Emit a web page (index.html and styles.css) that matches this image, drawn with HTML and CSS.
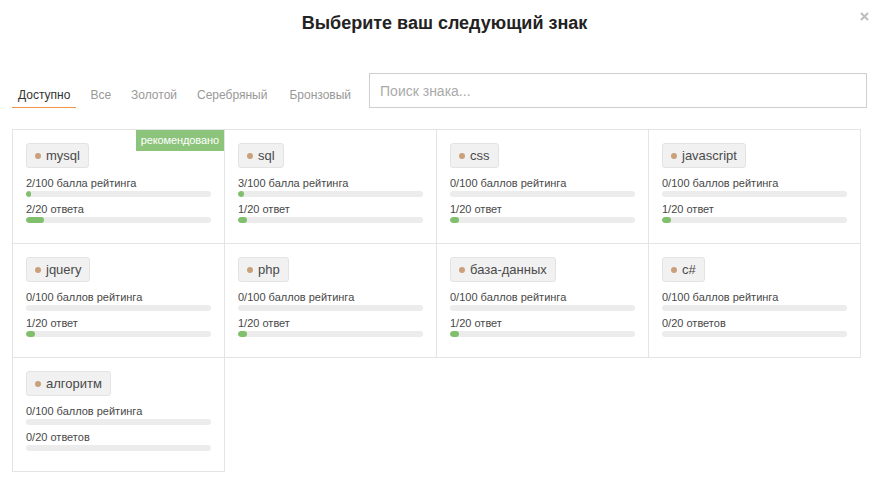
FILE: index.html
```html
<!DOCTYPE html>
<html lang="ru">
<head>
<meta charset="utf-8">
<link rel="stylesheet" href="styles.css">
</head>
<body>
<div class="modal">
  <button class="close" aria-label="close"><svg width="9" height="9" viewBox="0 0 9 9"><path d="M1 1L8 8M8 1L1 8" stroke="#bdbdbd" stroke-width="2"/></svg></button>
  <h1 class="title">Выберите ваш следующий знак</h1>
  <div class="toolbar">
    <nav class="tabs">
      <a class="tab active">Доступно</a>
      <a class="tab">Все</a>
      <a class="tab">Золотой</a>
      <a class="tab">Серебряный</a>
      <a class="tab">Бронзовый</a>
    </nav>
    <input class="search" type="text" placeholder="Поиск знака...">
  </div>
  <div class="grid">
    <div class="cell">
      <span class="badge">рекомендовано</span>
      <span class="tag"><i class="dot"></i>mysql</span>
      <div class="label">2/100 балла рейтинга</div>
      <div class="bar"><div class="fill" style="width:5px"></div></div>
      <div class="label">2/20 ответа</div>
      <div class="bar"><div class="fill" style="width:18px"></div></div>
    </div>
    <div class="cell">
      <span class="tag"><i class="dot"></i>sql</span>
      <div class="label">3/100 балла рейтинга</div>
      <div class="bar"><div class="fill" style="width:6px"></div></div>
      <div class="label">1/20 ответ</div>
      <div class="bar"><div class="fill" style="width:9px"></div></div>
    </div>
    <div class="cell">
      <span class="tag"><i class="dot"></i>css</span>
      <div class="label">0/100 баллов рейтинга</div>
      <div class="bar"></div>
      <div class="label">1/20 ответ</div>
      <div class="bar"><div class="fill" style="width:9px"></div></div>
    </div>
    <div class="cell">
      <span class="tag"><i class="dot"></i>javascript</span>
      <div class="label">0/100 баллов рейтинга</div>
      <div class="bar"></div>
      <div class="label">1/20 ответ</div>
      <div class="bar"><div class="fill" style="width:9px"></div></div>
    </div>
    <div class="cell">
      <span class="tag"><i class="dot"></i>jquery</span>
      <div class="label">0/100 баллов рейтинга</div>
      <div class="bar"></div>
      <div class="label">1/20 ответ</div>
      <div class="bar"><div class="fill" style="width:9px"></div></div>
    </div>
    <div class="cell">
      <span class="tag"><i class="dot"></i>php</span>
      <div class="label">0/100 баллов рейтинга</div>
      <div class="bar"></div>
      <div class="label">1/20 ответ</div>
      <div class="bar"><div class="fill" style="width:9px"></div></div>
    </div>
    <div class="cell">
      <span class="tag"><i class="dot"></i>база-данных</span>
      <div class="label">0/100 баллов рейтинга</div>
      <div class="bar"></div>
      <div class="label">1/20 ответ</div>
      <div class="bar"><div class="fill" style="width:9px"></div></div>
    </div>
    <div class="cell">
      <span class="tag"><i class="dot"></i>c#</span>
      <div class="label">0/100 баллов рейтинга</div>
      <div class="bar"></div>
      <div class="label">0/20 ответов</div>
      <div class="bar"></div>
    </div>
    <div class="cell">
      <span class="tag"><i class="dot"></i>алгоритм</span>
      <div class="label">0/100 баллов рейтинга</div>
      <div class="bar"></div>
      <div class="label">0/20 ответов</div>
      <div class="bar"></div>
    </div>
  </div>
</div>
</body>
</html>
```
FILE: styles.css
```css
* { box-sizing: border-box; }
html, body { margin: 0; padding: 0; background: #fff; }
body {
  font-family: "Liberation Sans", Arial, sans-serif;
  color: #333;
  width: 881px;
  height: 481px;
  overflow: hidden;
}
.modal {
  position: relative;
  padding: 12px 0 0 12px;
}
.close {
  position: absolute;
  top: 12px;
  left: 860px;
  border: 0;
  background: none;
  padding: 0;
  width: 9px;
  height: 9px;
  display: block;
}
.close svg { display: block; }
.title {
  margin: 0 0 39px 0;
  padding-right: 4px;
  font-size: 18px;
  line-height: 22px;
  font-weight: bold;
  text-align: center;
  color: #222;
}
.toolbar {
  display: flex;
  align-items: flex-end;
  height: 35px;
  margin-bottom: 21px;
}
.tabs {
  display: flex;
  align-items: flex-end;
  margin-right: 12px;
}
.tab {
  font-size: 12px;
  line-height: 16px;
  padding: 0 6px 4px 6px;
  margin-right: 8px;
  color: #999;
  border-bottom: 1px solid transparent;
}
.tab:nth-child(4) { margin-right: 10px; }
.tab:last-child { margin-right: 0; }
.tab.active {
  color: #333;
  border-bottom-color: #f2954a;
}
.search {
  width: 500px;
  height: 35px;
  margin-left: auto;
  margin-right: 14px;
  border: 1px solid #cfcfcf;
  padding: 0 10px;
  font-family: "Liberation Sans", Arial, sans-serif;
  font-size: 14px;
  color: #333;
  outline: none;
}
.search::placeholder { color: #aaa; }
.grid {
  display: grid;
  grid-template-columns: repeat(4, max-content);
}
.cell {
  position: relative;
  width: 212px;
  height: 114px;
  padding: 13px 13px 20px 13px;
  border-right: 1px solid #e4e4e4;
  border-bottom: 1px solid #e4e4e4;
}
.cell:nth-child(4n+1) { width: 213px; border-left: 1px solid #e4e4e4; }
.cell:nth-child(-n+4) { border-top: 1px solid #e4e4e4; height: 115px; }
.badge {
  position: absolute;
  top: 0;
  right: 0;
  height: 21px;
  line-height: 21px;
  padding: 0 5px 0 5px;
  background: #8cc47b;
  color: #fff;
  font-size: 11px;
  letter-spacing: -0.1px;
}
.tag {
  display: inline-flex;
  align-items: center;
  height: 25px;
  padding: 0 8px 0 8px;
  background: #f1f1f1;
  border: 1px solid #e3e3e3;
  border-radius: 3px;
  font-size: 13px;
  color: #4a4a4a;
  margin-bottom: 8px;
}
.dot {
  width: 6px;
  height: 6px;
  border-radius: 50%;
  background: #c9a07a;
  margin-right: 5px;
}
.label {
  font-size: 11px;
  line-height: 14px;
  color: #484848;
  margin-bottom: 1px;
}
.bar {
  width: 185px;
  height: 6px;
  border-radius: 3px;
  background: #ececec;
  overflow: hidden;
  margin-bottom: 5px;
}
.bar:last-child { margin-bottom: 0; }
.fill {
  height: 100%;
  border-radius: 3px;
  background: #80bf6c;
}
```
